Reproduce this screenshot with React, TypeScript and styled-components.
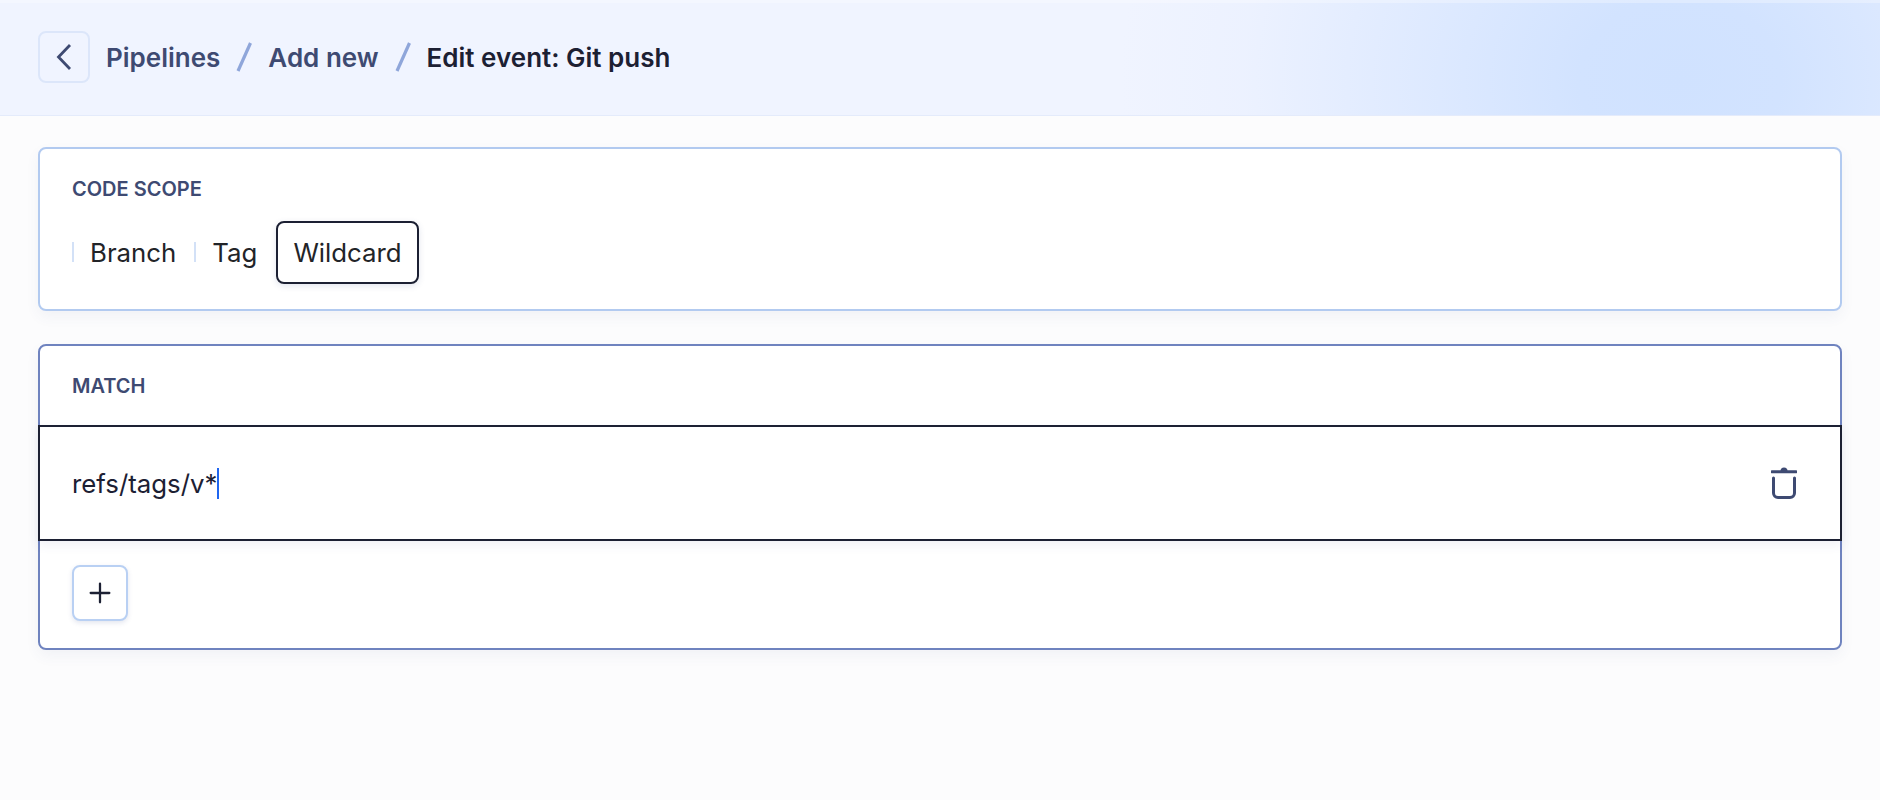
import { createGlobalStyle, styled } from "styled-components";
import { Plus } from "lucide-react";

const GlobalStyle = createGlobalStyle`
    html, body {
        margin: 0;
        padding: 0;
        background: #fcfcfd;
        font-family: Inter, "Liberation Sans", sans-serif;
        color: #1c2033;
    }
`;

const Page = styled.div`
    min-height: 800px;
    display: flex;
    flex-direction: column;
    background: #fcfcfd;
`;

const Header = styled.header`
    height: 116px;
    box-sizing: border-box;
    padding: 0 0 1px 38px;
    display: flex;
    align-items: center;
    gap: 16px;
    border-bottom: 1px solid #e4ebfb;
    box-shadow: inset 0 3px 0 rgba(255, 255, 255, 0.3);
    background:
        radial-gradient(
            ellipse 560px 460px at 1680px 80px,
            #d0e2ff 0%,
            #d2e3ff 18%,
            rgba(214, 229, 255, 0.62) 50%,
            rgba(224, 234, 255, 0.25) 78%,
            rgba(240, 244, 255, 0) 100%
        ),
        #f0f4ff;
`;

const BackButton = styled.button`
    width: 52px;
    height: 52px;
    padding: 0;
    display: flex;
    align-items: center;
    justify-content: center;
    background: transparent;
    color: #3e4a72;
    border: 2px solid #dce6fa;
    border-radius: 8px;
`;

const Crumbs = styled.nav`
    display: flex;
    align-items: center;
    gap: 16px;
    font-size: 26px;
    font-weight: 600;
`;

const Crumb = styled.span<{ $current?: boolean }>`
    color: ${({ $current }) => ($current ? "#1c2033" : "#3e4a72")};
`;

const Slash = styled.svg`
    display: block;
`;

const Main = styled.main`
    padding: 31px 38px 0;
    display: flex;
    flex-direction: column;
    gap: 33px;
`;

const Card = styled.section<{ $active?: boolean }>`
    background: #fff;
    border: 2px solid ${({ $active }) => ($active ? "#6f83bf" : "#b2caf0")};
    border-radius: 8px;
    box-shadow: 0 6px 14px rgba(60, 80, 140, 0.06);
`;

const CardLabel = styled.div`
    font-size: 20px;
    line-height: 24px;
    font-weight: 600;
    color: #3e4a72;
`;

const ScopeBody = styled.div`
    padding: 28px 32px 25px;
    display: flex;
    flex-direction: column;
    gap: 20px;
`;

const Tabs = styled.div`
    display: flex;
    align-items: center;
`;

const Tab = styled.div<{ $selected?: boolean; $divider?: boolean }>`
    height: 63px;
    box-sizing: border-box;
    display: flex;
    align-items: center;
    padding: 0 18px;
    font-size: 25.8px;
    color: #222428;
    border-radius: 8px;
    position: relative;
    ${({ $selected }) =>
        $selected &&
        `
        border: 2px solid #1c2033;
        padding: 0 15px;
        margin-left: 1px;
        box-shadow: 0 2px 6px rgba(60, 80, 140, 0.15);
    `}
    ${({ $divider }) =>
        $divider &&
        `
        &::before {
            content: "";
            position: absolute;
            left: 0;
            top: 21px;
            width: 2px;
            height: 20px;
            background: #d3e1f7;
        }
    `}
`;

const MatchHead = styled.div`
    padding: 28px 32px 0;
    height: 79px;
    box-sizing: border-box;
`;

const MatchRow = styled.div`
    margin: 0 -2px;
    height: 116px;
    box-sizing: border-box;
    display: flex;
    align-items: center;
    justify-content: space-between;
    padding: 0 43px 0 32px;
    background: #fff;
    border: 2px solid #1c2033;
    box-shadow: 0 4px 10px rgba(60, 80, 140, 0.08);
`;

const MatchValue = styled.div`
    font-size: 25.8px;
    line-height: 31px;
    display: flex;
    align-items: center;
`;

const Caret = styled.span`
    display: inline-block;
    width: 2px;
    height: 31px;
    background: #1f66f0;
`;

const DeleteIcon = styled.svg`
    display: block;
    color: #3e4a72;
`;

const MatchFoot = styled.div`
    padding: 24px 32px 27px;
`;

const AddButton = styled.button`
    width: 56px;
    height: 56px;
    padding: 0;
    display: flex;
    align-items: center;
    justify-content: center;
    background: #fff;
    color: #1c2033;
    border: 2px solid #b9d0f3;
    border-radius: 8px;
    box-shadow: 0 2px 5px rgba(60, 80, 140, 0.14);
`;

const Separator = () => (
    <Slash width="16" height="30" viewBox="0 0 16 30">
        <path d="M14.5 1 L2 29" stroke="#8fa6da" strokeWidth="3.2" fill="none" />
    </Slash>
);

const App = () => {
    return (
        <Page>
            <GlobalStyle />
            <Header>
                <BackButton>
                    <svg width="16" height="28" viewBox="0 0 16 28" fill="none">
                        <path d="M14 2 L2.5 14 L14 26" stroke="currentColor" strokeWidth="2.8" />
                    </svg>
                </BackButton>
                <Crumbs>
                    <Crumb>Pipelines</Crumb>
                    <Separator />
                    <Crumb>Add new</Crumb>
                    <Separator />
                    <Crumb $current>Edit event: Git push</Crumb>
                </Crumbs>
            </Header>
            <Main>
                <Card>
                    <ScopeBody>
                        <CardLabel>CODE SCOPE</CardLabel>
                        <Tabs>
                            <Tab $divider>Branch</Tab>
                            <Tab $divider>Tag</Tab>
                            <Tab $selected>Wildcard</Tab>
                        </Tabs>
                    </ScopeBody>
                </Card>
                <Card $active>
                    <MatchHead>
                        <CardLabel>MATCH</CardLabel>
                    </MatchHead>
                    <MatchRow>
                        <MatchValue>
                            refs/tags/v*
                            <Caret />
                        </MatchValue>
                        <DeleteIcon width="26" height="32" viewBox="0 0 26 32" fill="none">
                            <path d="M1 4.8 H25" stroke="currentColor" strokeWidth="3" strokeLinecap="round" />
                            <path d="M9.5 4 a3.5 3.5 0 0 1 7 0 Z" fill="currentColor" />
                            <path d="M2.5 11 V26 a4.5 4.5 0 0 0 4.5 4.5 H19 a4.5 4.5 0 0 0 4.5 -4.5 V11" stroke="currentColor" strokeWidth="3" strokeLinecap="round" />
                        </DeleteIcon>
                    </MatchRow>
                    <MatchFoot>
                        <AddButton>
                            <Plus size={32} strokeWidth={1.7} />
                        </AddButton>
                    </MatchFoot>
                </Card>
            </Main>
        </Page>
    );
};

export default App;
